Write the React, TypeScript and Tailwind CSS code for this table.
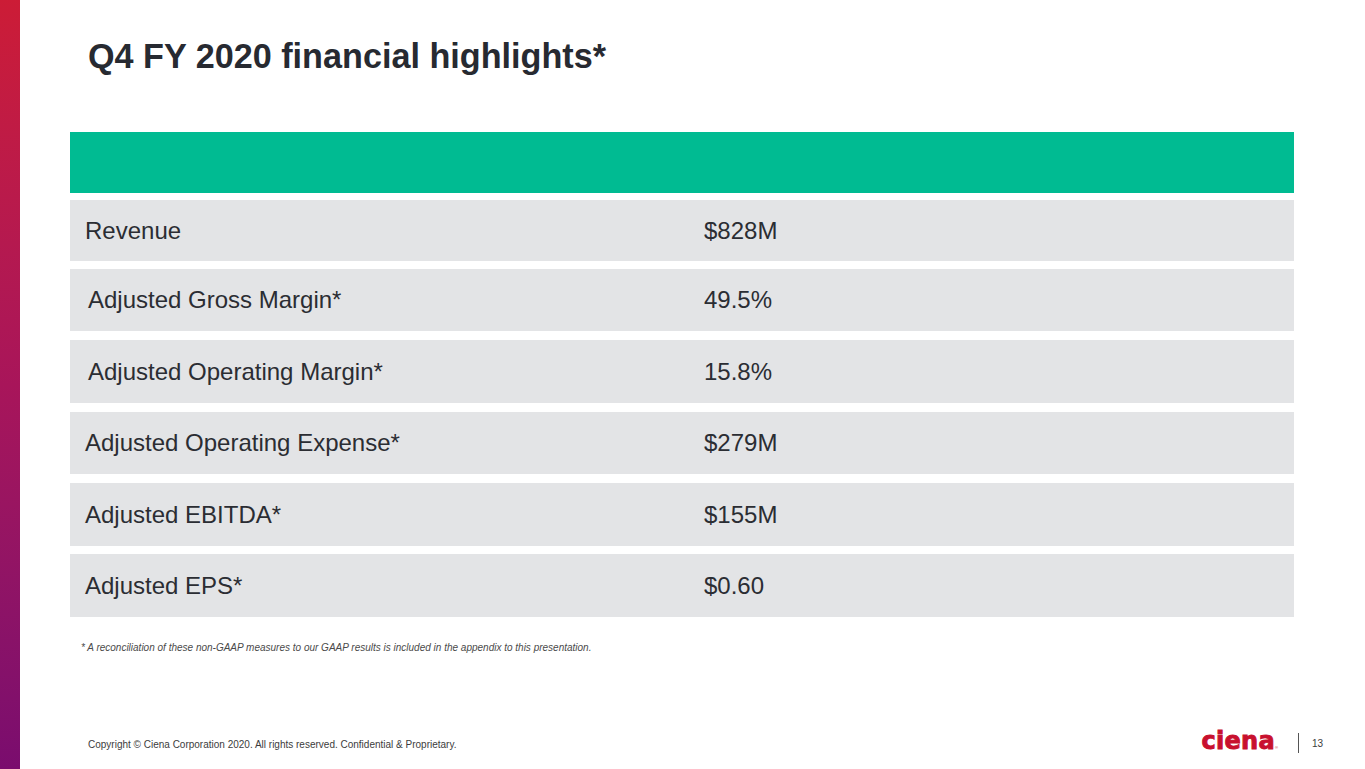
import React from "react";

const rows = [
  { label: "Revenue", value: "$828M", pl: "pl-[15px]", box: "h-[61px]" },
  { label: "Adjusted Gross Margin*", value: "49.5%", pl: "pl-[18px]", box: "h-[62px] mt-[8px]" },
  { label: "Adjusted Operating Margin*", value: "15.8%", pl: "pl-[18px]", box: "h-[63px] mt-[9px]" },
  { label: "Adjusted Operating Expense*", value: "$279M", pl: "pl-[15px]", box: "h-[62px] mt-[9px]" },
  { label: "Adjusted EBITDA*", value: "$155M", pl: "pl-[15px]", box: "h-[63px] mt-[9px]" },
  { label: "Adjusted EPS*", value: "$0.60", pl: "pl-[15px]", box: "h-[63px] mt-[8px]" },
];

export default function App() {
  return (
    <div
      className="w-[1365px] h-[769px] bg-white flex overflow-hidden"
      style={{ fontFamily: '"Liberation Sans", Arial, sans-serif' }}
    >
      {/* side stripe */}
      <div className="w-[20px] h-full bg-gradient-to-b from-[#cc1c36] via-[#a8155a] to-[#7a0c6e]" />

      <div className="flex-1 flex flex-col">
        <h1 className="ml-[68px] mt-[36px] h-[41px] text-[34.2px] leading-[41px] font-bold text-[#272a31]">
          Q4 FY 2020 financial highlights*
        </h1>

        <div className="ml-[50px] mt-[55px] w-[1224px] flex flex-col">
          <div className="h-[61px] bg-[#00bb92]" />
          <div className="mt-[7px] flex flex-col">
            {rows.map((r) => (
              <div key={r.label} className={`${r.box} bg-[#e3e4e6] flex items-center`}>
                <div className={`w-[634px] ${r.pl} text-[24px] text-[#2b2d33]`}>{r.label}</div>
                <div className="text-[24px] text-[#2b2d33]">{r.value}</div>
              </div>
            ))}
          </div>
        </div>

        <p className="ml-[61px] mt-[23px] text-[10px] italic text-[#4a4a4a]">
          * A reconciliation of these non-GAAP measures to our GAAP results is included in the appendix to this presentation.
        </p>

        <div className="mt-auto mb-[16px] flex items-end">
          <p className="ml-[68px] mb-[1px] text-[10px] text-[#3c3c3c]">
            Copyright © Ciena Corporation 2020. All rights reserved. Confidential &amp; Proprietary.
          </p>
          <div className="ml-auto flex items-end">
            <div className="flex items-end">
              <span
                className="text-[24px] leading-[24px] font-bold text-[#c8102e] tracking-[0.3px] [-webkit-text-stroke:0.9px_#c8102e]"
                style={{ fontFamily: '"DejaVu Sans", sans-serif' }}
              >
                ciena
              </span>
              <span className="text-[4px] leading-[4px] text-[#c8102e] mb-[3px]">®</span>
            </div>
            <div className="ml-[20px] mb-[0px] w-px h-[20px] bg-[#555]" />
            <span className="ml-[13px] mr-[42px] mb-[2px] text-[10px] text-[#3c3c3c]">13</span>
          </div>
        </div>
      </div>
    </div>
  );
}
